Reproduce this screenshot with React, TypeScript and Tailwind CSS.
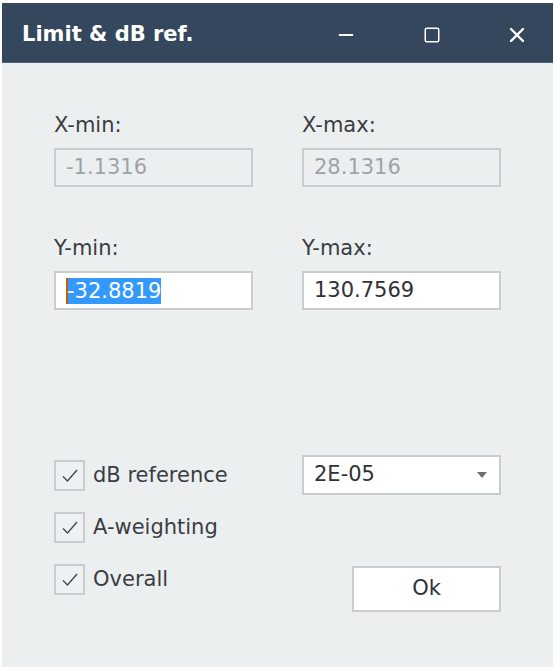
import { Minus, Square, X } from "lucide-react";

const font = { fontFamily: '"DejaVu Sans", "Liberation Sans", sans-serif' };

function Field({ label, value, disabled, selected }: { label: string; value: string; disabled?: boolean; selected?: boolean }) {
  return (
    <div className="flex flex-col">
      <p className="h-[26px] text-[21px] leading-[26px] text-[#3a3d42]">{label}</p>
      <div
        className={`mt-[10px] flex h-[39px] w-[199px] items-center border-2 px-[10px] text-[21px] ${
          disabled ? "border-[#c9cdd0] bg-[#eceff0] text-[#9ea3ab]" : "border-[#c9cdd0] bg-white text-[#2f3237]"
        }`}
      >
        {selected ? (
          <span className="flex h-[26px] items-center bg-[#3399ff] leading-[26px] text-white">
            <span className="mr-[-1px] h-[26px] w-[2px] bg-[#c85a00]" />
            {value}
          </span>
        ) : (
          <span>{value}</span>
        )}
      </div>
    </div>
  );
}

function Check({ label }: { label: string }) {
  return (
    <div className="flex h-[31px] items-center gap-[8px]">
      <div className="flex h-[31px] w-[31px] items-center justify-center border-2 border-[#c9cdd0] bg-[#eef1f2]">
        <svg width="18" height="16" viewBox="0 0 18 16" fill="none">
          <path d="M2 8.5 L6.5 13 L16 2" stroke="#4a4d52" strokeWidth="1.5" />
        </svg>
      </div>
      <span className="text-[21px] leading-[31px] text-[#3a3d42]">{label}</span>
    </div>
  );
}

export default function App() {
  return (
    <div className="h-[670px] w-[554px] bg-white pl-[2px] pt-[3px]" style={font}>
      <div className="flex h-[664px] w-[551px] flex-col bg-[#eceff0]">
        <div className="flex h-[60px] items-center border-b border-[#56677a] bg-[#34475c] pl-[20px] pt-[4px] text-white">
          <h1 className="flex-1 text-[21px] font-bold">Limit &amp; dB ref.</h1>
          <div className="flex items-center">
            <Minus className="mr-[66px] h-[22px] w-[22px]" strokeWidth={2} />
            <Square className="mr-[64px] h-[18px] w-[18px]" strokeWidth={2} />
            <X className="mr-[24px] h-[24px] w-[24px]" strokeWidth={2.4} />
          </div>
        </div>

        <div className="flex flex-col px-[52px]">
          <div className="mt-[49px] grid grid-cols-[199px_199px] gap-x-[49px]">
            <Field label="X-min:" value="-1.1316" disabled />
            <Field label="X-max:" value="28.1316" disabled />
          </div>
          <div className="mt-[48px] grid grid-cols-[199px_199px] gap-x-[49px]">
            <Field label="Y-min:" value="-32.8819" selected />
            <Field label="Y-max:" value="130.7569" />
          </div>

          <div className="mt-[145px] grid grid-cols-[248px_199px]">
            <div className="flex flex-col gap-[21px] pt-[5px]">
              <Check label="dB reference" />
              <Check label="A-weighting" />
              <Check label="Overall" />
            </div>
            <div className="flex flex-col">
              <div className="flex h-[40px] items-center justify-between border-2 border-[#c9cdd0] bg-white pl-[10px] pr-[12px] text-[21px] text-[#2f3237]">
                <span>2E-05</span>
                <svg width="10" height="6" viewBox="0 0 10 6">
                  <path d="M0 0 H10 L5 6 Z" fill="#6b6e73" />
                </svg>
              </div>
              <button className="ml-[50px] mt-[71px] h-[46px] w-[149px] border-2 border-[#c9cdd0] bg-white text-[21px] text-[#2f3237]">
                Ok
              </button>
            </div>
          </div>
        </div>
      </div>
    </div>
  );
}
